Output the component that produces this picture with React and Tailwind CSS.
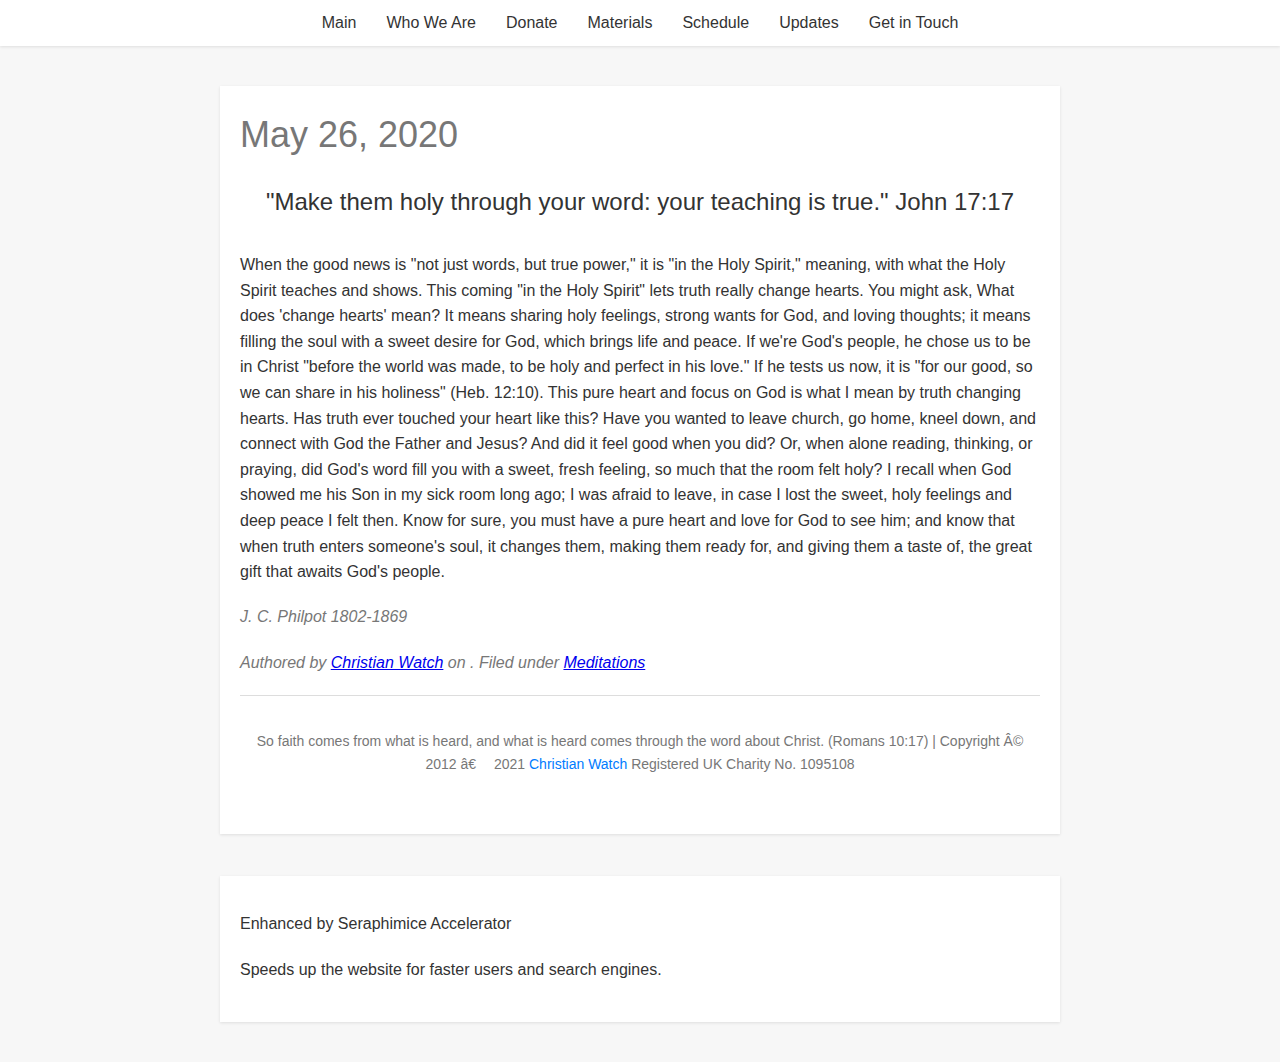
export default function App() {
  const nav = ["Main", "Who We Are", "Donate", "Materials", "Schedule", "Updates", "Get in Touch"];
  return (
    <div className="min-h-[1062px] bg-[#f7f7f7] text-[#333]" style={{ fontFamily: '"Liberation Sans", Arial, sans-serif' }}>
      <nav className="h-[46px] bg-white shadow-[0_1px_3px_rgba(0,0,0,0.1)] flex justify-center items-center">
        <ul className="flex">
          {nav.map((n) => (
            <li key={n} className="px-[15px] text-[16px] text-[#333]">{n}</li>
          ))}
        </ul>
      </nav>
      <main className="w-[840px] mx-auto pt-[40px]">
        <article className="bg-white shadow-[0_1px_3px_rgba(0,0,0,0.1)] px-5 pt-[27px] pb-[58px]">
          <h1 className="text-[36px] leading-[44px] text-[#777]">May 26, 2020</h1>
          <h2 className="text-[24px] leading-[30px] text-center mt-[30px] text-[#333]">"Make them holy through your word: your teaching is true." John 17:17</h2>
          <p className="text-[16px] leading-[25.6px] mt-[35px]">
            When the good news is "not just words, but true power," it is "in the Holy Spirit," meaning, with what the Holy Spirit teaches and shows. This coming "in the Holy Spirit" lets truth really change hearts. You might ask, What does 'change hearts' mean? It means sharing holy feelings, strong wants for God, and loving thoughts; it means filling the soul with a sweet desire for God, which brings life and peace. If we're God's people, he chose us to be in Christ "before the world was made, to be holy and perfect in his love." If he tests us now, it is "for our good, so we can share in his holiness" (Heb. 12:10). This pure heart and focus on God is what I mean by truth changing hearts. Has truth ever touched your heart like this? Have you wanted to leave church, go home, kneel down, and connect with God the Father and Jesus? And did it feel good when you did? Or, when alone reading, thinking, or praying, did God's word fill you with a sweet, fresh feeling, so much that the room felt holy? I recall when God showed me his Son in my sick room long ago; I was afraid to leave, in case I lost the sweet, holy feelings and deep peace I felt then. Know for sure, you must have a pure heart and love for God to see him; and know that when truth enters someone's soul, it changes them, making them ready for, and giving them a taste of, the great gift that awaits God's people.
          </p>
          <p className="italic text-[#777] text-[16px] leading-[25.6px] mt-[19px]">J. C. Philpot 1802-1869</p>
          <p className="italic text-[#777] text-[16px] leading-[25.6px] mt-[21px]">
            Authored by <a href="#" className="text-[#0000ee] underline">Christian Watch</a> on . Filed under <a href="#" className="text-[#0000ee] underline">Meditations</a>
          </p>
          <hr className="border-0 border-t border-[#ddd] mt-[19px]" />
          <p className="text-center text-[14px] leading-[23px] text-[#777] mt-[34px] px-4">
            So faith comes from what is heard, and what is heard comes through the word about Christ. (Romans 10:17) | Copyright Â© 2012 â€<span className="inline-block w-[14px]"></span> 2021 <a href="#" className="text-[#007bff]">Christian Watch</a> Registered UK Charity No. 1095108
          </p>
        </article>
        <section className="bg-white shadow-[0_1px_3px_rgba(0,0,0,0.1)] mt-[42px] px-5 pt-[35px] pb-[40px] text-[16px] leading-[25.6px]">
          <p>Enhanced by Seraphimice Accelerator</p>
          <p className="mt-[20px]">Speeds up the website for faster users and search engines.</p>
        </section>
      </main>
    </div>
  );
}
